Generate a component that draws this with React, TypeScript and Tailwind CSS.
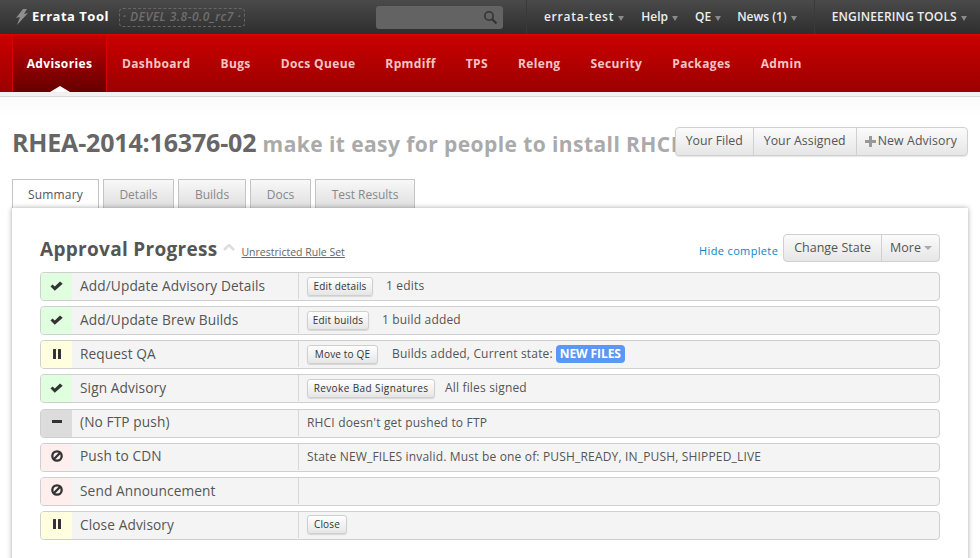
import React from "react";

const topLinks = [
  { label: "errata-test", cls: "tracking-[0.75px]" },
  { label: "Help", cls: "ml-[17px]" },
  { label: "QE", cls: "ml-[17px]" },
  { label: "News (1)", cls: "ml-[16px]" },
];

const navItems = ["Dashboard", "Bugs", "Docs Queue", "Rpmdiff", "TPS", "Releng", "Security", "Packages", "Admin"];

const tabs = [
  { label: "Details", cls: "w-[71px]" },
  { label: "Builds", cls: "w-[68px]" },
  { label: "Docs", cls: "w-[61px]" },
  { label: "Test Results", cls: "w-[100px]" },
];

type Status = "done" | "wait" | "none" | "block";

interface Step {
  status: Status;
  name: string;
  button?: string;
  buttonCls?: string;
  note?: string;
  badge?: string;
}

const steps: Step[] = [
  { status: "done", name: "Add/Update Advisory Details", button: "Edit details", buttonCls: "mr-[13px] w-[66px]", note: "1 edits" },
  { status: "done", name: "Add/Update Brew Builds", button: "Edit builds", buttonCls: "mr-[13px] w-[62px]", note: "1 build added" },
  { status: "wait", name: "Request QA", button: "Move to QE", buttonCls: "mr-[14px] w-[71px]", note: "Builds added, Current state:", badge: "NEW FILES" },
  { status: "done", name: "Sign Advisory", button: "Revoke Bad Signatures", buttonCls: "mr-[10px] w-[128px] tracking-[0.4px]", note: "All files signed" },
  { status: "none", name: "(No FTP push)", note: "RHCI doesn't get pushed to FTP" },
  { status: "block", name: "Push to CDN", note: "State NEW_FILES invalid. Must be one of: PUSH_READY, IN_PUSH, SHIPPED_LIVE" },
  { status: "block", name: "Send Announcement" },
  { status: "wait", name: "Close Advisory", button: "Close", buttonCls: "w-[40px]" },
];

const statusBg: Record<Status, string> = {
  done: "bg-[#dfffdf]",
  wait: "bg-[#ffffdf]",
  none: "bg-[#dcdcdc]",
  block: "bg-[#ffeeee]",
};

const Caret = () => (
  <span className="ml-[4px] inline-block h-0 w-0 border-x-[3px] border-t-[5px] border-x-transparent border-t-[#8a8a8a]" />
);

const StatusIcon = ({ status }: { status: Status }) => {
  if (status === "done") {
    return (
      <svg width="13" height="10" viewBox="0 0 13 10">
        <path d="M0.5 5.5 L2.5 3.5 L4.8 5.6 L10 0.5 L12.7 2.7 L4.8 9.8 Z" fill="#333" />
      </svg>
    );
  }
  if (status === "wait") {
    return (
      <svg width="8" height="10" viewBox="0 0 8 10">
        <rect x="0" y="0" width="3" height="10" rx="0.5" fill="#333" />
        <rect x="5" y="0" width="3" height="10" rx="0.5" fill="#333" />
      </svg>
    );
  }
  if (status === "none") {
    return (
      <svg width="10" height="4" viewBox="0 0 10 4">
        <rect x="0" y="0" width="10" height="3" fill="#333" />
      </svg>
    );
  }
  return (
    <svg width="12" height="12" viewBox="0 0 12 12">
      <circle cx="6" cy="6" r="4.7" fill="none" stroke="#333" strokeWidth="2.3" />
      <path d="M2.8 9.2 L9.2 2.8" stroke="#333" strokeWidth="2.3" />
    </svg>
  );
};

const StepRow = ({ step }: { step: Step }) => (
  <div className="flex h-[29px] overflow-hidden rounded-[4px] border border-[#cfcfcf] bg-[#f4f4f4]">
    <div className={`flex w-[31px] shrink-0 items-center justify-center pb-[2px] ${statusBg[step.status]}`}>
      <StatusIcon status={step.status} />
    </div>
    <div className="flex w-[226px] shrink-0 items-center pb-[1px] pl-[8px] text-[13.7px] tracking-[0.1px] whitespace-nowrap text-[#555]">
      {step.name}
    </div>
    <div className="mb-[1px] flex flex-1 items-center border-l border-[#d8d8d8] pl-[8px] text-[12px] tracking-[0.17px] whitespace-nowrap text-[#555]">
      {step.button && (
        <span
          className={`rounded-[3px] border border-[#cfcfcf] bg-gradient-to-b from-[#ffffff] to-[#e6e6e6] py-[1px] text-center text-[10px] leading-[15px] text-[#333] shadow-[0_1px_1px_rgba(0,0,0,0.12)] ${step.buttonCls}`}
        >
          {step.button}
        </span>
      )}
      {step.note && <span>{step.note}</span>}
      {step.badge && (
        <span className="ml-[3px] rounded-[4px] bg-[#5b97f7] px-[4px] text-[12px] leading-[18px] font-bold tracking-[-0.1px] text-white">
          {step.badge}
        </span>
      )}
    </div>
  </div>
);

export default function App() {
  return (
    <div className="h-[558px] w-[980px] overflow-hidden bg-white font-['Open_Sans',sans-serif]">
      {/* top bar */}
      <div className="flex h-[34px] items-center bg-gradient-to-b from-[#4a4a4a] to-[#2e2e2e]">
        <svg className="ml-[15px]" width="13" height="16" viewBox="0 0 13 16">
          <path d="M8 0 L12 0 L9 5 L13 4 L2 16 L5 8 L1 9 Z" fill="#8f8f8f" />
        </svg>
        <span className="ml-[4px] text-[13px] font-bold tracking-[0.5px] text-white">Errata Tool</span>
        <span className="ml-[10px] flex h-[19px] w-[126px] items-center justify-center rounded-[4px] border border-dashed border-[#666] text-[12px] font-semibold tracking-[0.5px] whitespace-nowrap text-[#6f6f6f] italic">
          · DEVEL 3.8-0.0_rc7 ·
        </span>
        <div className="ml-[131px] flex h-[23px] w-[127px] items-center justify-end rounded-[3px] bg-[#636363] pr-[5px]">
          <svg width="15" height="15" viewBox="0 0 15 15">
            <circle cx="6" cy="6" r="4.2" fill="none" stroke="#333" strokeWidth="1.6" />
            <path d="M9.2 9.2 L13.5 13.5" stroke="#333" strokeWidth="2.2" />
          </svg>
        </div>
        <div className="ml-[23px] flex h-full items-center border-x border-[#3a3a3a] px-[17px]">
          {topLinks.map((l) => (
            <span key={l.label} className={`${l.cls} text-[12px] font-semibold whitespace-nowrap text-[#eeeeee]`}>
              {l.label}
              <Caret />
            </span>
          ))}
        </div>
        <span className="ml-[17px] text-[12px] font-semibold tracking-[0.15px] whitespace-nowrap text-[#eeeeee]">
          ENGINEERING TOOLS
          <Caret />
        </span>
      </div>

      {/* red nav */}
      <div className="flex h-[58px] border-t border-[#e30000] bg-gradient-to-b from-[#c90000] to-[#9c0000] pl-[12px]">
        <div className="relative flex h-full w-[95px] items-center justify-center border-x border-[#d80000] bg-gradient-to-b from-[#c40000] to-[#660000] text-[12px] font-bold tracking-[0.38px] text-white">
          Advisories
          <span className="absolute bottom-0 left-[37px] h-0 w-0 border-x-[10px] border-b-[6px] border-x-transparent border-b-white" />
        </div>
        <div className="flex items-center gap-[30px] pl-[15px] text-[12px] font-bold tracking-[0.36px] text-[#f4c4c4]">
          {navItems.map((n) => (
            <span key={n} className="whitespace-nowrap">{n}</span>
          ))}
        </div>
      </div>
      <div className="h-[5px] border-b border-[#d8d8d8] bg-[#f1f1f1]" />

      {/* title row */}
      <div className="flex items-start bg-gradient-to-b from-[#fafafa] to-white to-30% pt-[26px] pr-[12px] pl-[12px]">
        <div className="h-[38px] min-w-0 flex-1 overflow-hidden text-[25px] leading-[38px] font-bold tracking-[-0.17px] whitespace-nowrap text-[#666]">
          RHEA-2014:16376-02{" "}
          <span className="text-[21px] tracking-[0.42px] text-[#aaaaaa]">make it easy for people to install RHCI</span>
        </div>
        <div className="mt-[4px] flex h-[29px] shrink-0 overflow-hidden rounded-[4px] border border-[#d0d0d0] bg-gradient-to-b from-[#fbfbfb] to-[#e6e6e6] text-[12.3px] text-[#555] shadow-[0_1px_1px_rgba(0,0,0,0.1)]">
          <span className="flex items-center border-r border-[#d0d0d0] px-[10px]">Your Filed</span>
          <span className="flex items-center border-r border-[#d0d0d0] px-[10px] tracking-[0.05px]">Your Assigned</span>
          <span className="flex items-center pr-[10px] pl-[8px] tracking-[0.12px]">
            <svg className="mr-[2px]" width="11" height="11" viewBox="0 0 11 11">
              <path d="M4 0 H7 V4 H11 V7 H7 V11 H4 V7 H0 V4 H4 Z" fill="#999" />
            </svg>
            New Advisory
          </span>
        </div>
      </div>

      {/* tabs */}
      <div className="relative z-10 mt-[18px] flex h-[30px] gap-[4px] pl-[12px] text-[12px]">
        <div className="flex h-[30px] w-[87px] items-center justify-center border border-b-0 border-[#c4c4c4] bg-white tracking-[0.15px] text-[#555]">
          Summary
        </div>
        {tabs.map((t) => (
          <div
            key={t.label}
            className={`flex h-[30px] items-center justify-center border border-b-0 border-[#c4c4c4] bg-gradient-to-b from-[#f8f8f8] to-[#dedede] text-[#888] ${t.cls}`}
          >
            {t.label}
          </div>
        ))}
      </div>

      {/* panel */}
      <div className="relative z-20 mx-[12px] mt-[-1px] h-[400px] bg-white px-[28px] pt-[25px] shadow-[0_0_5px_rgba(0,0,0,0.35)]">
        <div className="flex h-[30px] items-center">
          <span className="mt-[2px] text-[19px] font-bold tracking-[0.3px] text-[#555]">Approval Progress</span>
          <svg className="mt-[-1px] ml-[6px]" width="12" height="7" viewBox="0 0 12 7">
            <path d="M1 6 L6 1 L11 6" fill="none" stroke="#dddddd" strokeWidth="2.5" />
          </svg>
          <span className="mt-[9px] ml-[6px] text-[10.5px] text-[#666] underline">Unrestricted Rule Set</span>
          <span className="mt-[7px] ml-auto text-[11px] tracking-[0.35px] text-[#0a85c6]">Hide complete</span>
          <div className="ml-[5px] flex h-[28px] overflow-hidden rounded-[4px] border border-[#d0d0d0] bg-gradient-to-b from-[#fbfbfb] to-[#e6e6e6] text-[12.5px] text-[#555]">
            <span className="flex items-center border-r border-[#d0d0d0] px-[10px]">Change State</span>
            <span className="flex items-center pr-[7px] pl-[8px]">
              More
              <span className="ml-[3px] inline-block h-0 w-0 border-x-[4px] border-t-[4px] border-x-transparent border-t-[#aaaaaa]" />
            </span>
          </div>
        </div>
        <div className="mt-[9px] flex flex-col gap-[5.15px]">
          {steps.map((s) => (
            <StepRow key={s.name} step={s} />
          ))}
        </div>
      </div>
    </div>
  );
}
